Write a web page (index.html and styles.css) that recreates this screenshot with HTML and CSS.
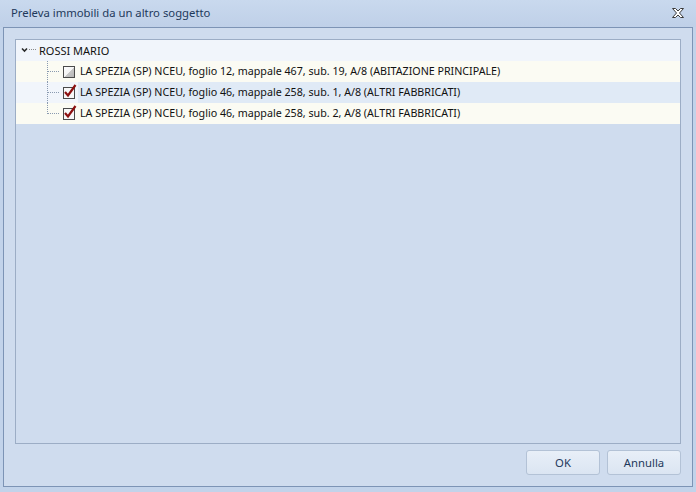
FILE: index.html
```html
<!DOCTYPE html>
<html>
<head>
<meta charset="utf-8">
<link rel="stylesheet" href="styles.css">
</head>
<body>
<div class="window">
  <div class="titlebar">
    <span class="title">Preleva immobili da un altro soggetto</span>
    <svg class="close" width="12" height="10" viewBox="0 0 12 10">
      <path d="M0.5 0.5 H3.5 L6 3 L8.5 0.5 H11.5 L7.5 5 L11.5 9.5 H8.5 L6 7 L3.5 9.5 H0.5 L4.5 5 Z" fill="#ffffff" stroke="#3b3b3b" stroke-width="1" stroke-linejoin="round"/>
    </svg>
  </div>
  <div class="frame">
    <div class="tree">
      <div class="row root">
        <svg class="expander" width="23" height="21" viewBox="0 0 23 21">
          <polyline points="6,8.5 8.5,11 11,8.5" fill="none" stroke="#2b2b2b" stroke-width="1.6"/>
          <line x1="13" y1="9.5" x2="21" y2="9.5" stroke="#8a8a8a" stroke-dasharray="1 1"/>
        </svg>
        <span class="label">ROSSI MARIO</span>
      </div>
      <div class="row child odd">
        <svg class="lines" width="44" height="21" viewBox="0 0 44 21">
          <line x1="31.5" y1="0" x2="31.5" y2="21" stroke="#8a9ab0" stroke-dasharray="1 1"/>
          <line x1="32" y1="10.5" x2="44" y2="10.5" stroke="#8a9ab0" stroke-dasharray="1 1"/>
        </svg>
        <svg class="check" width="16" height="21" viewBox="0 0 16 21">
          <defs>
            <linearGradient id="g1" x1="0" y1="0" x2="1" y2="1">
              <stop offset="0" stop-color="#ffffff"/>
              <stop offset="0.5" stop-color="#f4f4f4"/>
              <stop offset="0.52" stop-color="#c8c8c8"/>
              <stop offset="1" stop-color="#b4b4b4"/>
            </linearGradient>
          </defs>
          <rect x="2.5" y="5.5" width="11" height="11" fill="url(#g1)" stroke="#4a4a4a"/>
        </svg>
        <span class="label">LA SPEZIA (SP) NCEU, foglio 12, mappale 467, sub. 19, A/8 (ABITAZIONE PRINCIPALE)</span>
      </div>
      <div class="row child even">
        <svg class="lines" width="44" height="21" viewBox="0 0 44 21">
          <line x1="31.5" y1="0" x2="31.5" y2="21" stroke="#8a9ab0" stroke-dasharray="1 1"/>
          <line x1="32" y1="10.5" x2="44" y2="10.5" stroke="#8a9ab0" stroke-dasharray="1 1"/>
        </svg>
        <svg class="check" width="16" height="21" viewBox="0 0 16 21">
          <rect x="2.5" y="5.5" width="11" height="11" fill="#f8f8f8" stroke="#4a4a4a"/>
          <path d="M4 10 L7 13.5 L14.5 3" fill="none" stroke="#8c1010" stroke-width="2.2"/>
        </svg>
        <span class="label selected">LA SPEZIA (SP) NCEU, foglio 46, mappale 258, sub. 1, A/8 (ALTRI FABBRICATI)</span>
      </div>
      <div class="row child odd">
        <svg class="lines" width="44" height="21" viewBox="0 0 44 21">
          <line x1="31.5" y1="0" x2="31.5" y2="11" stroke="#8a9ab0" stroke-dasharray="1 1"/>
          <line x1="32" y1="10.5" x2="44" y2="10.5" stroke="#8a9ab0" stroke-dasharray="1 1"/>
        </svg>
        <svg class="check" width="16" height="21" viewBox="0 0 16 21">
          <rect x="2.5" y="5.5" width="11" height="11" fill="#f8f8f8" stroke="#4a4a4a"/>
          <path d="M4 10 L7 13.5 L14.5 3" fill="none" stroke="#8c1010" stroke-width="2.2"/>
        </svg>
        <span class="label">LA SPEZIA (SP) NCEU, foglio 46, mappale 258, sub. 2, A/8 (ALTRI FABBRICATI)</span>
      </div>
    </div>
    <div class="buttons">
      <button class="btn">OK</button>
      <button class="btn">Annulla</button>
    </div>
  </div>
</div>
</body>
</html>
```
FILE: styles.css
```css
html, body {
  margin: 0;
  padding: 0;
}
body {
  width: 696px;
  height: 492px;
  background: #c2d3ea;
  font-family: "Noto Sans", "Open Sans", sans-serif;
  overflow: hidden;
}
.window {
  display: flex;
  flex-direction: column;
  height: 492px;
}
.titlebar {
  height: 27px;
  display: flex;
  align-items: center;
  justify-content: space-between;
  padding: 0 12px 0 11px;
  background: linear-gradient(#c9d9ee, #bfd0e8);
  box-sizing: border-box;
}
.title {
  font-size: 11.3px;
  color: #1e395b;
  position: relative;
  top: -1px;
}
.close {
  display: block;
  position: relative;
  top: -1px;
}
.frame {
  margin: 0 3px;
  height: 460px;
  box-sizing: border-box;
  border: 1px solid #7d94b5;
  background: #cfdcee;
  padding: 11px;
  display: flex;
  flex-direction: column;
}
.tree {
  height: 405px;
  box-sizing: border-box;
  border: 1px solid #9cadc5;
  background: #cfdcee;
  font-size: 10.7px;
  color: #111;
}
.row {
  height: 21px;
  display: flex;
  align-items: center;
}
.root {
  background: #f1f5fb;
}
.odd {
  background: #fbfbf3;
}
.even {
  background: #f1f5fb;
}
.expander, .lines, .check {
  display: block;
  flex: none;
}
.check {
  margin-left: 1px;
}
.label {
  line-height: 21px;
  white-space: nowrap;
}
.root .label {
  font-size: 11px;
}
.child .label {
  padding-left: 2px;
  flex: 1;
  margin-left: 1px;
}
.selected {
  background: #e0eaf6;
}
.buttons {
  margin-top: 6px;
  display: flex;
  justify-content: flex-end;
  gap: 7px;
}
.btn {
  width: 74px;
  height: 25px;
  box-sizing: border-box;
  border: 1px solid #b3c2d6;
  border-radius: 3px;
  background: linear-gradient(#e8eff8, #dbe5f2);
  font-family: "Noto Sans", "Open Sans", sans-serif;
  font-size: 11.3px;
  color: #1e395b;
  padding: 0;
}
```
